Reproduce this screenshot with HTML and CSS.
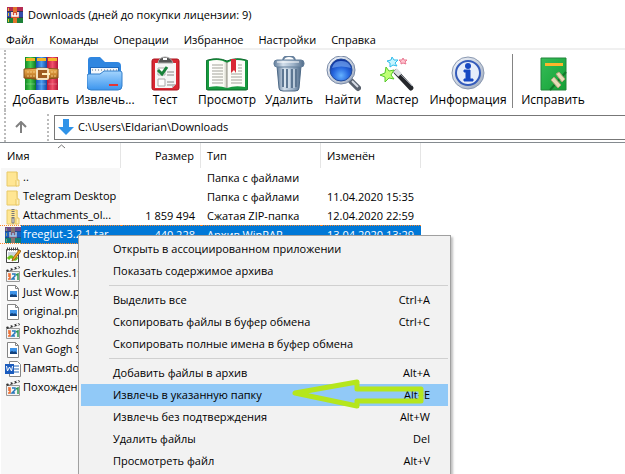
FILE: index.html
```html
<!DOCTYPE html>
<html lang="ru">
<head>
<meta charset="utf-8">
<title>Downloads</title>
<link rel="stylesheet" href="styles.css">
</head>
<body>
<svg class="defs" aria-hidden="true">
  <defs>
    <linearGradient id="gr" x2="1"><stop offset="0" stop-color="#118a25"/><stop offset=".5" stop-color="#48c94d"/><stop offset="1" stop-color="#087825"/></linearGradient>
    <linearGradient id="bl" x2="1"><stop offset="0" stop-color="#1450ae"/><stop offset=".5" stop-color="#4b9df0"/><stop offset="1" stop-color="#1448a2"/></linearGradient>
    <linearGradient id="rd" x2="1"><stop offset="0" stop-color="#b81738"/><stop offset=".5" stop-color="#f0506c"/><stop offset="1" stop-color="#b51438"/></linearGradient>
    <linearGradient id="belt" x2="0" y2="1"><stop offset="0" stop-color="#f0b65a"/><stop offset=".5" stop-color="#d28e36"/><stop offset="1" stop-color="#9a5c18"/></linearGradient>
    <linearGradient id="fold" x2="0" y2="1"><stop offset="0" stop-color="#a4d4fd"/><stop offset="1" stop-color="#3b95ee"/></linearGradient>
    <linearGradient id="metal" x2="1"><stop offset="0" stop-color="#607b99"/><stop offset=".3" stop-color="#d3dfeb"/><stop offset=".65" stop-color="#9db2c8"/><stop offset="1" stop-color="#526d8b"/></linearGradient>
    <linearGradient id="page" x2="1"><stop offset="0" stop-color="#fff"/><stop offset=".8" stop-color="#fbfbf4"/><stop offset="1" stop-color="#c9c9bd"/></linearGradient>
    <radialGradient id="lens" cx=".5" cy=".75" r=".7"><stop offset="0" stop-color="#65b2ff"/><stop offset=".5" stop-color="#2869e0"/><stop offset="1" stop-color="#0d329e"/></radialGradient>
    <linearGradient id="ring" x2="1" y2="1"><stop offset="0" stop-color="#f7faff"/><stop offset="1" stop-color="#9ba8bc"/></linearGradient>
    <linearGradient id="fix" x2="1" y2="1"><stop offset="0" stop-color="#36bd58"/><stop offset="1" stop-color="#14a035"/></linearGradient>
    <symbol id="folder" viewBox="0 0 16 16"><path d="M2 1h10v14H2z" fill="#ffe693" stroke="#e8c968"/><path d="M12 1v8h2v6h-3V9" fill="#fff0b8" stroke="#e8c660"/></symbol>
    <symbol id="pic" viewBox="0 0 16 16"><path d="M2.500.5h8l3 3v12h-11z" fill="#fff" stroke="#858585"/><path d="M10.500.5v3h3" fill="none" stroke="#858585"/><path d="M5 6h7v6H5z" fill="#3e93e8"/><path d="M5 12v-2l2-1 2 1 1-1 2 2v1z" fill="#14427c"/></symbol>
    <symbol id="clap" viewBox="0 0 16 16"><path d="M1.500 5.500h13v10h-13z" fill="#f4f4f4" stroke="#999"/><path d="M1 4 14 0l1 2L2 6z" fill="#333"/><path d="m3 3 1 2 2-1-1-2zm4-1 1 2 2-1-1-2zm4-1 1 2 2-1-1-2z" fill="#fff"/><path d="M3 8h2v5H3m0-3h2" fill="none" stroke="#ec6a2b" stroke-width="1.500"/><path d="M7 8h3v2l-3 3h3" fill="none" stroke="#2777bb" stroke-width="1.500"/><path d="m11 9 2-1v6" fill="none" stroke="#2c9850" stroke-width="1.500"/></symbol>
    <symbol id="rar" viewBox="0 0 16 16"><path d="M0 0h16v5H0z" fill="#b52c54"/><path d="M0 5h16v6H0z" fill="#324dac"/><path d="M0 11h16v5H0z" fill="#1d8138"/><path d="M0 4h16v1H0zm0 6h16v1H0z" fill="#343154"/><path d="M1 1h1v3H1zm0 5h1v3H1zm0 6h1v3H1z" fill="#e5bd31"/><path d="M6 0h4v16H6z" fill="#e0742a"/><path d="M4 5h8v6H4z" fill="#d44c34"/><path d="M5 5v4h6V5M8 6v3" fill="none" stroke="#fff" stroke-width="1.500"/></symbol>
  </defs>
</svg>

<main class="window">
  <header class="titlebar">
    <svg class="icon16" aria-hidden="true"><use href="#rar"/></svg>
    <h1>Downloads (дней до покупки лицензии: 9)</h1>
  </header>
  <nav class="menubar">
    <button>Файл</button><button>Команды</button><button>Операции</button><button>Избранное</button><button>Настройки</button><button>Справка</button>
  </nav>

  <div class="toolbar">
    <button class="tool">
      <svg viewBox="0 0 36 36"><path d="M2 1h11v33H2z" fill="url(#gr)"/><path d="M13 1h11v33H13z" fill="url(#bl)"/><path d="M24 1h11v33H24z" fill="url(#rd)"/><path d="M3 2h9v3H3zm11 0h9v3h-9zm11 0h9v3h-9z" fill="#f3b728"/><path d="M3 28h9m2 0h9m2 0h9" stroke="#fff" stroke-opacity=".25"/><path d="M1 13q17-2 34 0v9q-17 3-34 0z" fill="url(#belt)" stroke="#85511b"/><path d="M4 16h8m16 0h6M4 20h8m16 0h6" stroke="#f5ca80" stroke-dasharray="2 1"/><rect x="14" y="13" width="11" height="10" rx="1" fill="#9f5d22" stroke="#f4e2bd" stroke-width="2"/><path d="M19 18h8" stroke="#fff1c0" stroke-width="2"/></svg>
      <span>Добавить</span>
    </button>
    <button class="tool">
      <svg viewBox="0 0 36 36"><path d="M1 29V4q0-3 3-3h9l5 5h12q4 0 4 4v19z" fill="#2f86e0"/><path d="M3 11h29v9H3z" fill="#1e69bd"/><path d="M4 12h27v9H4z" fill="#f4f8fc"/><path d="M5 14h25" stroke="#a8b4c0" stroke-width="2" stroke-dasharray="1 2"/><path d="M0 20q0-2 2-2h11l4-3h16q2 0 2 2v13q0 4-4 4H4q-4 0-4-4z" fill="url(#fold)" stroke="#327fcb"/><path d="M22 28h9v2h-9z" fill="#e43535"/></svg>
      <span>Извлечь...</span>
    </button>
    <button class="tool">
      <svg viewBox="0 0 36 36"><rect x="5" y="3" width="27" height="31" rx="2" fill="#d92732" stroke="#a9151f"/><path d="M8 7h21v21l-4 4H8z" fill="#f6f6f6"/><path d="M25 32v-4h4" fill="#bbb"/><path d="M11 7q1-6 7-6t8 6z" fill="#555" stroke="#aaa"/><path d="M16 3h4" stroke="#fff" stroke-width="2"/><path d="M11 12h7v7h-7zm0 11h7v7h-7z" fill="#fff" stroke="#aaa"/><path d="m11 14 4 4 5-7" fill="none" stroke="#18823a" stroke-width="3"/><path d="M20 16h7m-7 3h7m-7 7h7m-7 3h5" stroke="#888"/></svg>
      <span>Тест</span>
    </button>
    <button class="tool">
      <svg class="wide" viewBox="0 0 42 36"><path d="M0 6q0-2 2-2 10-3 19 1 9-4 19-1 2 0 2 2v26q0 2-2 2H2q-2 0-2-2z" fill="#16993e" stroke="#0b662a"/><path d="M3 5q11-3 18 2v25q-8-3-18-1z" fill="url(#page)"/><path d="M39 5q-11-3-18 2v25q8-3 18-1z" fill="#fdfdf8"/><path d="M21 6v26" stroke="#8d8d80"/><path d="M6 9h11M6 12h11M6 15h11M6 18h11M6 21h11M6 24h11M6 27h11M25 18h11m-11 3h11m-11 3h11m-11 3h11m-4-18h4m-4 3h4m-4 3h4" stroke="#a3a39b"/><path d="M25 3h5v14l-2-3-3 3z" fill="#da2834"/></svg>
      <span>Просмотр</span>
    </button>
    <button class="tool">
      <svg viewBox="0 0 36 36"><path d="M12 4q1-4 6-4t6 4" fill="none" stroke="#657f9c" stroke-width="2"/><path d="M6 10h24l-2 22q0 3-4 3H12q-4 0-4-3z" fill="url(#metal)" stroke="#4e6a87"/><path d="M12 13v18m4-18v19m5-19v19m4-19v18" stroke="#5d7793" stroke-width="2"/><path d="M14 13v18m4-18v19m5-19v19" stroke="#e3edf5"/><rect x="3" y="4" width="30" height="7" rx="3" fill="url(#metal)" stroke="#637e9a"/><path d="M6 6h22" stroke="#fff"/></svg>
      <span>Удалить</span>
    </button>
    <button class="tool">
      <svg viewBox="0 0 36 36"><path d="m26 25 7 7" stroke="#5a626e" stroke-width="6" stroke-linecap="round"/><path d="m27 25 6 6" stroke="#d8dde5" stroke-width="2"/><circle cx="16" cy="14" r="14" fill="url(#ring)" stroke="#7889a6"/><circle cx="16" cy="14" r="11" fill="url(#lens)" stroke="#244c9b"/><path d="M7 12Q9 4 17 5q7 0 9 7-10-3-19 0z" fill="#73a4ef" opacity=".7"/></svg>
      <span>Найти</span>
    </button>
    <button class="tool">
      <svg viewBox="0 0 36 36"><path d="m17 16 15 16" stroke="#25272b" stroke-width="5" stroke-linecap="round"/><path d="m18 15 15 15" stroke="#8e949e"/><path d="m16 14 5 5" stroke="#d9dce1" stroke-width="5"/><path d="m7 11 3 4 5-1-3 5 3 4-5-1-4 4v-5l-5-2 5-2z" fill="#bfff75" stroke="#56c82b"/><path d="m13 1 2 3h4l-3 3 2 3-4-1-3 2V7L8 5l4-1z" fill="#c5f4ff" stroke="#2fbceb"/><path d="m24 2 1 2h3l-2 2 1 2-3-1-2 1V6l-2-2h3z" fill="#ffc3cf" stroke="#e97992"/></svg>
      <span>Мастер</span>
    </button>
    <button class="tool">
      <svg viewBox="0 0 36 36"><circle cx="18" cy="17" r="16" fill="url(#ring)" stroke="#8b99b1"/><circle cx="18" cy="17" r="12" fill="#e6edfa" stroke="#345bba" stroke-width="2"/><circle cx="18" cy="10" r="3" fill="#1748c2"/><path d="M14 14h6v9h3v2h-9v-2h2v-7h-2z" fill="#1748c2" stroke="#1748c2"/></svg>
      <span>Информация</span>
    </button>
    <i class="rule"></i>
    <button class="tool">
      <svg viewBox="0 0 36 36"><path d="M6 2h25v32H6z" fill="url(#fix)" stroke="#23853a"/><path d="M10 7h18v3H10z" fill="#ffb52b"/><path d="m15 34 16-18" stroke="#11782a" stroke-width="2"/><path d="m21 18 3-2 6 7-3 3zm-5 6 3-3 7 8-3 3z" fill="#e6dcb8" stroke="#b2a57b"/></svg>
      <span>Исправить</span>
    </button>
  </div>

  <div class="addressbar">
    <button class="up" aria-label="Вверх"><svg viewBox="0 0 12 12"><path d="M6 12V2M1 6l5-5 5 5" fill="none" stroke="#808080" stroke-width="2"/></svg></button>
    <i class="grip"></i>
    <label class="path">
      <svg viewBox="0 0 16 16"><path d="M5 0h6v8h5l-8 8-8-8h5z" fill="#3093e8"/></svg>
      <input type="text" value="C:\Users\Eldarian\Downloads" aria-label="Путь">
    </label>
  </div>

  <section class="files">
    <table>
      <colgroup><col class="c-name"><col class="c-size"><col class="c-type"><col class="c-date"><col></colgroup>
      <thead><tr><th>Имя<svg class="sort" viewBox="0 0 9 5"><path d="m1 4 3.500-3L8 4" fill="none" stroke="#777"/></svg></th><th class="num">Размер</th><th>Тип</th><th>Изменён</th><th></th></tr></thead>
      <tbody>
        <tr><td><svg class="icon16"><use href="#folder"/></svg>..</td><td></td><td>Папка с файлами</td><td></td><td></td></tr>
        <tr><td><svg class="icon16"><use href="#folder"/></svg>Telegram Desktop</td><td></td><td>Папка с файлами</td><td>11.04.2020 15:35</td><td></td></tr>
        <tr><td><svg class="icon16" viewBox="0 0 16 16"><use href="#folder"/><path d="M8 0v10" stroke="#777" stroke-width="3" stroke-dasharray="1 1"/><path d="M7 9h2v5H7z" fill="#eee" stroke="#777"/></svg>Attachments_ol...</td><td class="num">1 859 494</td><td>Сжатая ZIP-папка</td><td>12.04.2020 22:59</td><td></td></tr>
        <tr class="selected"><td><svg class="icon16" viewBox="0 0 16 16"><use href="#rar"/><path d="M0 0h16v16H0z" fill="#0078d7" opacity=".4"/></svg>freeglut-3.2.1.tar</td><td class="num">440 228</td><td>Архив WinRAR</td><td>13.04.2020 13:29</td><td></td></tr>
        <tr><td><svg class="icon16" viewBox="0 0 16 16"><path d="M1.500 2.500h12v13h-12z" fill="#fff" stroke="#444"/><path d="M2 2h12" stroke="#444" stroke-width="3" stroke-dasharray="1 1"/><path d="M3 6h8M3 8h7" stroke="#9ab"/><path d="M3 12q3-4 5-1t4-1" fill="none" stroke="#6cc51a" stroke-width="3"/><path d="m8 11 6-8 2 1-6 8-3 2z" fill="#f4a51c" stroke="#9d651a"/></svg>desktop.ini</td><td></td><td></td><td></td><td></td></tr>
        <tr><td><svg class="icon16"><use href="#clap"/></svg>Gerkules.1997</td><td></td><td></td><td></td><td></td></tr>
        <tr><td><svg class="icon16"><use href="#pic"/></svg>Just Wow.png</td><td></td><td></td><td></td><td></td></tr>
        <tr><td><svg class="icon16"><use href="#pic"/></svg>original.png</td><td></td><td></td><td></td><td></td></tr>
        <tr><td><svg class="icon16"><use href="#clap"/></svg>Pokhozhdeniya</td><td></td><td></td><td></td><td></td></tr>
        <tr><td><svg class="icon16"><use href="#pic"/></svg>Van Gogh S</td><td></td><td></td><td></td><td></td></tr>
        <tr><td><svg class="icon16" viewBox="0 0 16 16"><path d="M4.500.5h8l3 3v12h-11z" fill="#fff" stroke="#858585"/><path d="M9 5h5M9 8h5m-5 3h5" stroke="#2868b5"/><path d="M0 3h9v10H0z" fill="#1b5cbe"/><path d="m1.500 5 1 5L4.500 6l2 4 1-5" fill="none" stroke="#fff"/></svg>Память.docx</td><td></td><td></td><td></td><td></td></tr>
        <tr><td><svg class="icon16"><use href="#clap"/></svg>Похождения</td><td></td><td></td><td></td><td></td></tr>
      </tbody>
    </table>

    <div class="context" role="menu">
      <button role="menuitem">Открыть в ассоциированном приложении</button>
      <button role="menuitem">Показать содержимое архива</button>
      <hr>
      <button role="menuitem">Выделить все<kbd>Ctrl+A</kbd></button>
      <button role="menuitem">Скопировать файлы в буфер обмена<kbd>Ctrl+C</kbd></button>
      <button role="menuitem">Скопировать полные имена в буфер обмена</button>
      <hr>
      <button role="menuitem">Добавить файлы в архив<kbd>Alt+A</kbd></button>
      <button role="menuitem" class="active">Извлечь в указанную папку<kbd>Alt+E</kbd>
        <svg class="pointer" viewBox="0 0 132 30" aria-hidden="true"><path d="M3 14 65 3v7h64v12H65v5z" fill="none" stroke="#b5e61d" stroke-width="5" stroke-linejoin="round"/></svg>
      </button>
      <button role="menuitem">Извлечь без подтверждения<kbd>Alt+W</kbd></button>
      <button role="menuitem">Удалить файлы<kbd>Del</kbd></button>
      <button role="menuitem">Просмотреть файл<kbd>Alt+V</kbd></button>
    </div>
  </section>
</main>
</body>
</html>
```
FILE: styles.css
```css
* { box-sizing: border-box; }
body {
  margin: 0;
  overflow: hidden;
  background: #fff;
  color: #000;
  font: 11px/16px "Open Sans", "Noto Sans", sans-serif;
}
button, input, kbd { font: inherit; color: inherit; }
button { padding: 0; border: 0; background: none; text-align: left; }
.defs { position: absolute; width: 0; height: 0; }
.window { display: flex; flex-direction: column; min-height: 100vh; }
.icon16 { width: 16px; height: 16px; flex: none; }

.titlebar { display: flex; align-items: center; gap: 5px; height: 30px; padding: 0 7px; }
.titlebar h1 { margin: 0; font-size: 11px; font-weight: 400; white-space: nowrap; }

.menubar { display: flex; gap: 15px; height: 20px; padding: 2px 6px 0; border-bottom: 2px solid #f0f0f0; }

.toolbar {
  display: grid;
  grid-template-columns: 62px 66px 54px 70px 54px 54px 54px 88px 1px 80px;
  height: 60px;
  margin-left: 4px;
  padding-left: 4px;
  border-left: 2px dotted #bbb;
  font-size: 12px;
}
.tool { display: flex; flex-direction: column; align-items: center; padding-top: 6px; white-space: nowrap; }
.tool svg { width: 36px; height: 36px; flex: none; }
.tool .wide { width: 42px; }
.rule { margin: 4px 0 2px; background: #848484; }

.addressbar {
  display: flex;
  align-items: center;
  height: 32px;
  padding-top: 2px;
  margin-left: 4px;
  border-left: 2px dotted #bbb;
}
.up { width: 30px; margin-right: 11px; }
.up svg { display: block; width: 12px; height: 12px; margin: 0 auto; }
.grip { height: 27px; border-left: 2px dotted #bbb; }
.path { display: flex; flex: 1; align-items: center; gap: 4px; height: 25px; margin-left: 5px; padding-left: 3px; border: 1px solid #777; border-right: 0; }
.path svg { width: 16px; height: 16px; }
.path input { flex: 1; min-width: 0; padding: 0; border: 0; outline: 0; background: none; }

.files { position: relative; flex: 1; display: flex; border-top: 1px solid #858b90; }
.files::before { content: ""; position: absolute; inset: 25px auto 0 1px; width: 119px; background: #f7f7f7; }
table { position: relative; width: 100%; table-layout: fixed; border-spacing: 0; align-self: flex-start; }
.c-name { width: 121px; }
.c-size { width: 80px; }
.c-type { width: 120px; }
.c-date { width: 100px; }
th { position: relative; height: 25px; padding: 0 6px; border-right: 1px solid #e5e5e5; font-weight: 400; text-align: left; }
th:first-child { padding-left: 7px; }
th:last-child { border: 0; }
.sort { position: absolute; top: 1px; left: 57px; width: 9px; height: 5px; }
td { height: 19px; padding: 0 6px; white-space: nowrap; overflow: hidden; line-height: 17px; }
td:first-child { padding: 0 0 0 5px; }
td .icon16 { margin-right: 2px; vertical-align: middle; }
.num { text-align: right; padding-right: 6px; }
.selected td { background: #0078d7; color: #fff; border: 1px dotted #ff8728; border-width: 1px 0; line-height: 15px; }
.selected td:first-child { background: linear-gradient(to right, #f7f7f7 21px, #0078d7 21px); }
.selected td:last-child { background: none; border: 0; }

.context {
  position: absolute;
  top: 92px;
  left: 78px;
  width: 373px;
  padding: 2px;
  border: 1px solid #a0a0a0;
  background: #f2f2f2;
  box-shadow: 2px 2px 2px #8888;
}
.context button { position: relative; display: flex; justify-content: space-between; width: 100%; height: 22px; padding: 0 18px 0 32px; align-items: center; white-space: nowrap; }
.context hr { height: 1px; margin: 3px 0 3px 28px; border: 0; background: #d0d0d0; }
.context .active { background: #91c9f7; }
.pointer { position: absolute; right: 24px; top: -5px; width: 132px; height: 30px; }
```
